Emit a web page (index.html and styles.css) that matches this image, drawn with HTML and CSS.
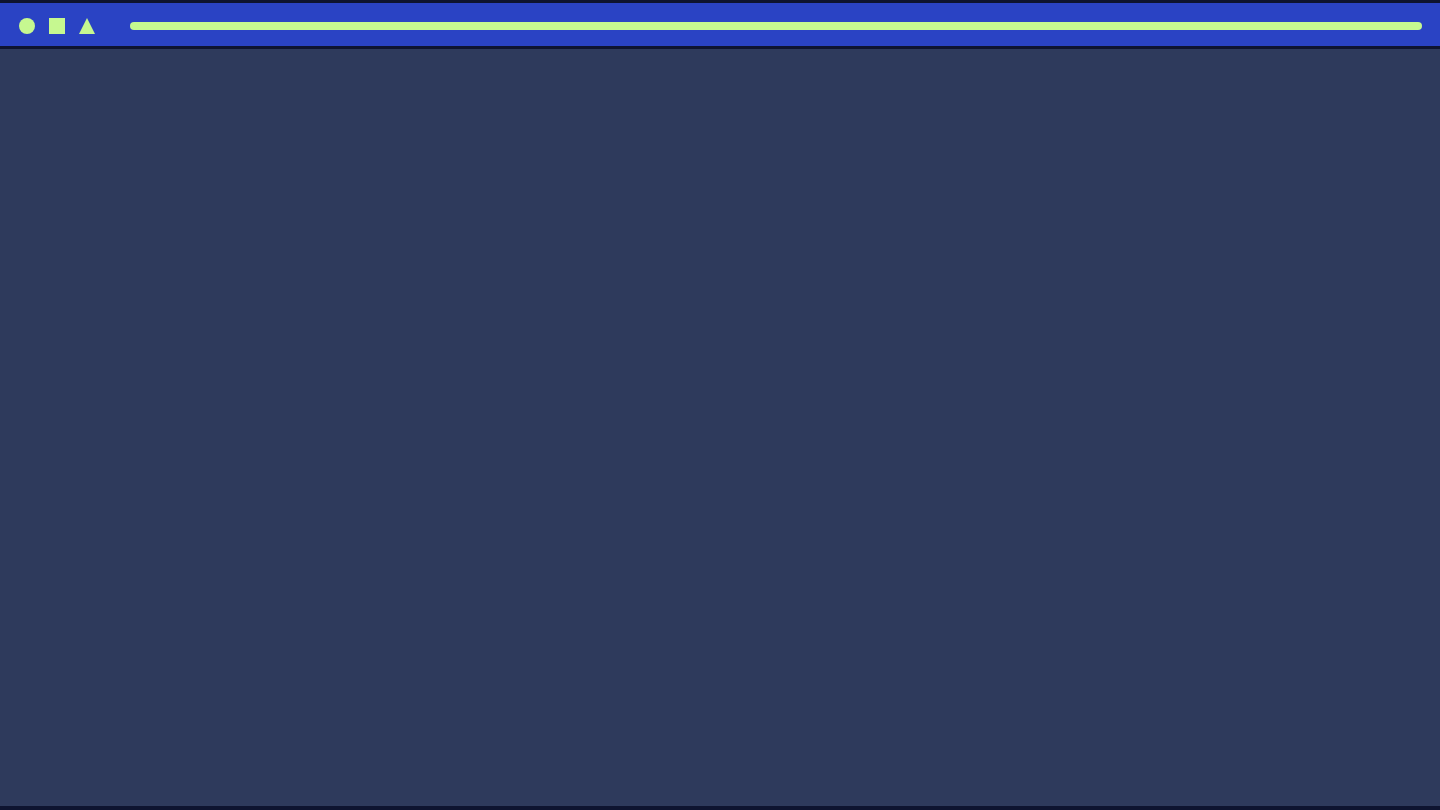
FILE: index.html
```html
<!DOCTYPE html>
<html lang="en">
<head>
<meta charset="utf-8">
<title>Window</title>
<link rel="stylesheet" href="styles.css">
</head>
<body>
<div class="frame">
  <header class="toolbar">
    <div class="shapes">
      <span class="shape circle"></span>
      <span class="shape square"></span>
      <svg class="shape triangle" viewBox="0 0 16 16" width="16" height="16" aria-hidden="true"><polygon points="8,0 16,16 0,16" fill="#c6f890"/></svg>
    </div>
    <div class="progress"></div>
  </header>
  <main class="content"></main>
</div>
</body>
</html>
```

FILE: styles.css
```css
html, body {
  margin: 0;
  padding: 0;
  height: 100%;
  background: #0e1430;
  font-family: "Liberation Sans", Arial, sans-serif;
}
.frame {
  height: 810px;
  box-sizing: border-box;
  display: flex;
  flex-direction: column;
  border-top: 3px solid #0e1430;
  border-bottom: 4px solid #0e1430;
}
.toolbar {
  box-sizing: border-box;
  height: 46px;
  flex: 0 0 auto;
  background: #2a43c4;
  display: flex;
  align-items: center;
  padding: 3px 18px 0 19px;
  gap: 35px;
  border-bottom: 3px solid #0e1430;
}
.shapes {
  display: flex;
  align-items: center;
  gap: 14px;
}
.shape {
  display: block;
  width: 16px;
  height: 16px;
  background: #c6f890;
}
.circle { border-radius: 50%; }
.triangle { background: none; }
.progress {
  flex: 1;
  height: 8px;
  border-radius: 4px;
  background: #c6f890;
}
.content {
  flex: 1;
  background: #2e3a5c;
}
```
